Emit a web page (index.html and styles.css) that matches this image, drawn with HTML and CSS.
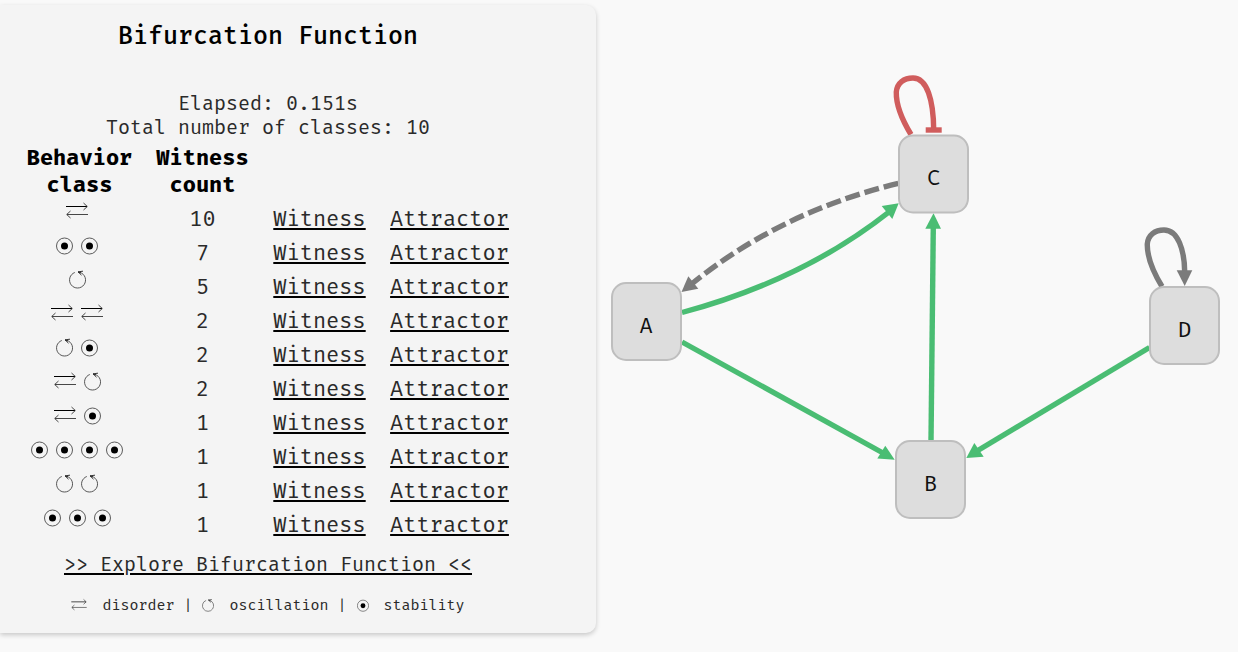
FILE: index.html
```html
<!DOCTYPE html>
<html lang="en">
<head>
<meta charset="utf-8">
<title>Bifurcation Function</title>
<link rel="stylesheet" href="styles.css">
</head>
<body>
<svg class="sprite" aria-hidden="true">
  <symbol id="disorder" viewBox="0 0 22 20">
    <path d="M0 5.5H21" stroke="#000" stroke-width="1"/>
    <path d="M17.500 2L21.300 5.500L17.500 9M22 13.500H1M4.500 10L.7 13.500L4.500 17" fill="none" stroke="#333" stroke-width=".9"/>
  </symbol>
  <symbol id="oscillation" viewBox="0 0 17 20">
    <path d="M5.800 3.500A8 8 0 1 0 11 3.400" fill="none" stroke="#444" stroke-width=".9"/>
    <path d="M9 2.800L14 2.200M9 2.800L12.500 6.200M9 3L12 4" fill="none" stroke="#222" stroke-width=".9"/>
  </symbol>
  <symbol id="stability" viewBox="0 0 17 20">
    <circle cx="8.500" cy="11" r="8" fill="none" stroke="#333" stroke-width=".8"/>
    <circle cx="8.500" cy="11" r="3.500"/>
  </symbol>
</svg>
<main class="page">
  <section class="panel">
    <h1 class="title">Bifurcation Function</h1>
    <p class="summary">Elapsed: 0.151s<br>Total number of classes: 10</p>
    <table class="classes">
      <thead>
        <tr><th class="col-class">Behavior class</th><th class="col-count">Witness count</th><td class="col-witness"></td><td class="col-attractor"></td></tr>
      </thead>
      <tbody>
        <tr><td class="behavior"><svg class="icon wide"><use href="#disorder"/></svg></td><td>10</td><td><a href="#w">Witness</a></td><td><a href="#a">Attractor</a></td></tr>
        <tr><td class="behavior"><svg class="icon"><use href="#stability"/></svg><svg class="icon"><use href="#stability"/></svg></td><td>7</td><td><a href="#w">Witness</a></td><td><a href="#a">Attractor</a></td></tr>
        <tr><td class="behavior"><svg class="icon"><use href="#oscillation"/></svg></td><td>5</td><td><a href="#w">Witness</a></td><td><a href="#a">Attractor</a></td></tr>
        <tr><td class="behavior"><svg class="icon wide"><use href="#disorder"/></svg><svg class="icon wide"><use href="#disorder"/></svg></td><td>2</td><td><a href="#w">Witness</a></td><td><a href="#a">Attractor</a></td></tr>
        <tr><td class="behavior"><svg class="icon"><use href="#oscillation"/></svg><svg class="icon"><use href="#stability"/></svg></td><td>2</td><td><a href="#w">Witness</a></td><td><a href="#a">Attractor</a></td></tr>
        <tr><td class="behavior"><svg class="icon wide"><use href="#disorder"/></svg><svg class="icon"><use href="#oscillation"/></svg></td><td>2</td><td><a href="#w">Witness</a></td><td><a href="#a">Attractor</a></td></tr>
        <tr><td class="behavior"><svg class="icon wide"><use href="#disorder"/></svg><svg class="icon"><use href="#stability"/></svg></td><td>1</td><td><a href="#w">Witness</a></td><td><a href="#a">Attractor</a></td></tr>
        <tr><td class="behavior"><svg class="icon"><use href="#stability"/></svg><svg class="icon"><use href="#stability"/></svg><svg class="icon"><use href="#stability"/></svg><svg class="icon"><use href="#stability"/></svg></td><td>1</td><td><a href="#w">Witness</a></td><td><a href="#a">Attractor</a></td></tr>
        <tr><td class="behavior"><svg class="icon"><use href="#oscillation"/></svg><svg class="icon"><use href="#oscillation"/></svg></td><td>1</td><td><a href="#w">Witness</a></td><td><a href="#a">Attractor</a></td></tr>
        <tr><td class="behavior"><svg class="icon"><use href="#stability"/></svg><svg class="icon"><use href="#stability"/></svg><svg class="icon"><use href="#stability"/></svg></td><td>1</td><td><a href="#w">Witness</a></td><td><a href="#a">Attractor</a></td></tr>
      </tbody>
    </table>
    <a class="explore" href="#explore">&gt;&gt; Explore Bifurcation Function &lt;&lt;</a>
    <div class="legend">
      <svg class="key wide"><use href="#disorder"/></svg><span>disorder |</span>
      <svg class="key"><use href="#oscillation"/></svg><span>oscillation |</span>
      <svg class="key"><use href="#stability"/></svg><span>stability</span>
    </div>
  </section>
  <svg class="graph" viewBox="597 0 641 652" role="img" aria-label="Regulatory network">
    <g class="edge positive">
      <path d="M682 312.500Q803 280 889 212"/>
      <path d="M682 342L883 453"/>
      <path d="M931 441L933.300 226"/>
      <path d="M1149.500 347.500L977 451"/>
    </g>
    <g class="tip positive">
      <path d="M898.700 203.300L881.700 206L892.300 219Z"/>
      <path d="M894.700 459.700L885.300 445.700L877.300 458.500Z"/>
      <path d="M933.500 213.300L925.300 228.700H941Z"/>
      <path d="M966.300 458L974.300 443L983.700 456.700Z"/>
    </g>
    <path class="edge neutral dashed" d="M898.300 183.300Q780 212 691 284.500"/>
    <path class="tip neutral" d="M681.500 292L688.300 276.300L698.300 288.700Z"/>
    <path class="edge negative" d="M911 134.500C901 118 896 104 896.300 92C897 83 904 78 913 78C927 78 933.500 100 933.700 130"/>
    <rect class="tip negative" x="925.700" y="127.300" width="16" height="5.400"/>
    <path class="edge neutral" d="M1162 286.500C1152 270 1147 256 1147.300 244C1148 235 1155 230 1164 230C1178 230 1184.500 250 1184.700 272"/>
    <path class="tip neutral" d="M1184.700 286L1176.700 270.300H1192.300Z"/>
    <g class="node"><rect x="612" y="283" width="69" height="77" rx="14"/><text x="646" y="333">A</text></g>
    <g class="node"><rect x="896" y="441" width="69" height="77" rx="14"/><text x="930.500" y="491">B</text></g>
    <g class="node"><rect x="899" y="135.500" width="69" height="77" rx="14"/><text x="933.500" y="185">C</text></g>
    <g class="node"><rect x="1150" y="287" width="69" height="77" rx="14"/><text x="1184.500" y="337">D</text></g>
  </svg>
</main>
</body>
</html>
```
FILE: styles.css
```css
* { box-sizing: border-box; }

body {
  margin: 0;
  background: #f9f9f9;
  color: #2a2a2a;
  font-family: "Fira Mono", "Liberation Mono", monospace;
}

.sprite { display: none; }

.page {
  display: grid;
  grid-template-columns: 597fr 641fr;
  align-items: start;
}

.panel {
  display: flex;
  flex-direction: column;
  align-items: center;
  margin: 5px 1px 0 0;
  padding: 16px 60px 18px 0;
  background: #f4f4f4;
  border-radius: 0 10px 10px 0;
  box-shadow: 0 2px 5px rgba(0, 0, 0, .2);
}

.title {
  margin: 0 0 40px;
  color: #000;
  font-size: 25px;
  font-weight: 500;
  line-height: 30px;
}

.summary {
  margin: 0 0 5px;
  font-size: 20px;
  line-height: 24px;
  text-align: center;
}

.classes {
  width: 506px;
  table-layout: fixed;
  border-collapse: collapse;
  font-size: 22px;
  line-height: 27px;
  text-align: center;
}

.classes th {
  padding: 0 6px 3px;
  color: #000;
  font-weight: 700;
}

.classes td { padding: 0; }
.classes tbody td { height: 34px; }

.col-class { width: 129px; }
.col-count { width: 117px; }
.col-witness { width: 117px; }
.col-attractor { width: 143px; }

.classes tbody .behavior {
  padding-right: 5px;
  vertical-align: top;
  line-height: 0;
}

.icon {
  width: 17px;
  height: 20px;
  margin: 0 4px;
}

.icon.wide { width: 22px; }

a {
  color: inherit;
  text-decoration: underline 2px #000;
  text-underline-offset: 2px;
}

.explore {
  margin: 11px 0 19px;
  font-size: 20px;
  line-height: 24px;
}

.legend {
  display: flex;
  align-items: center;
  font-size: 15px;
  line-height: 20px;
}

.key {
  width: 12px;
  height: 14px;
  margin: 0 15px 0 10px;
}

.key.wide {
  width: 16px;
  margin-left: 0;
}

.graph {
  display: block;
  width: 100%;
  height: auto;
}

.edge {
  fill: none;
  stroke-width: 5.4px;
}

.edge.positive { stroke: #4abd73; }
.edge.negative { stroke: #d05d5d; }
.edge.neutral { stroke: #7b7b7b; }
.edge.dashed { stroke-dasharray: 15 5; }

.tip.positive { fill: #4abd73; }
.tip.negative { fill: #d05d5d; }
.tip.neutral { fill: #7b7b7b; }

.node rect {
  fill: #ddd;
  stroke: #bebebe;
  stroke-width: 2px;
}

.node text {
  fill: #111;
  font-size: 22px;
  text-anchor: middle;
}
```
